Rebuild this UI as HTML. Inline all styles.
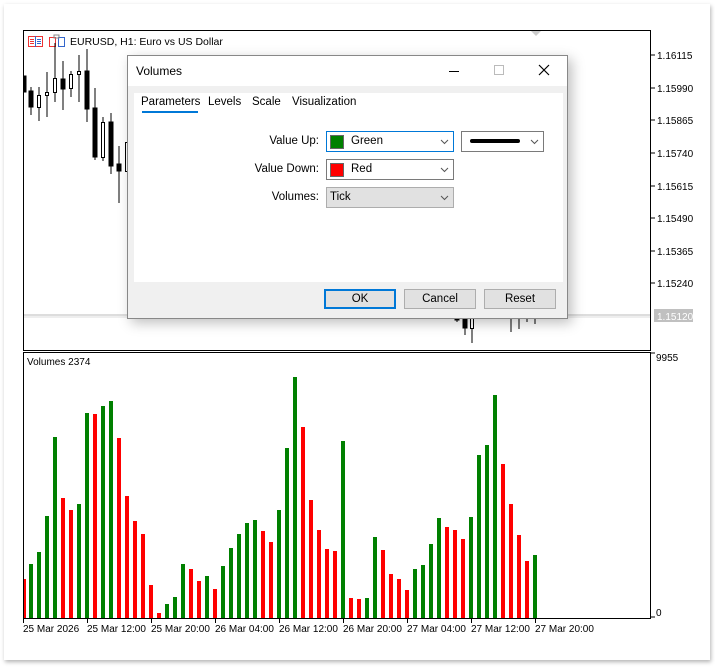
<!DOCTYPE html>
<html><head><meta charset="utf-8"><style>
html,body{margin:0;padding:0;background:#fff;width:715px;height:670px;overflow:hidden;font-family:"Liberation Sans",sans-serif}
.frame{position:absolute;left:4px;top:4px;width:706px;height:656px;background:#fff;box-shadow:1px 2px 4px rgba(0,0,0,.3)}
svg.main{position:absolute;left:0;top:0}
.dlg{position:absolute;left:127px;top:55px;width:439px;height:262px;background:#f0f0f0;border:1px solid #888;box-shadow:4px 4px 12px rgba(0,0,0,.25);font-size:11.5px;color:#000}
.tb{position:absolute;left:0;top:0;width:439px;height:30px;background:#fff}
.tb .t{position:absolute;left:8px;top:8px;font-size:12px}
.inner{position:absolute;left:6px;top:37px;width:429px;height:189px;background:#fff}
.tab{position:absolute;top:3px;font-size:11.5px}
.lbl{position:absolute;right:248px;font-size:11.5px;text-align:right}
.cb{position:absolute;box-sizing:border-box;height:21px;border:1px solid #7a7a7a;background:#fff}
.cb .sw{position:absolute;left:3px;top:3px;width:12px;height:12px;border:1px solid #666}
.cb span{position:absolute;left:24px;top:3px;font-size:11.5px}
.cb svg.ar{position:absolute;left:auto;right:4px;top:5px;width:9px;height:9px}
.btn{position:absolute;top:233px;width:72px;height:20px;box-sizing:border-box;border:1px solid #adadad;background:#e1e1e1;text-align:center;line-height:18px;font-size:11.5px}
</style></head><body>
<div class="frame"></div>
<svg class="main" width="715" height="670" font-family="Liberation Sans, sans-serif" font-size="10">
<rect x="23.5" y="30.5" width="627" height="320" fill="none" stroke="#000"/>
<rect x="23.5" y="352.5" width="627" height="266" fill="none" stroke="#000"/>
<line x1="24" y1="315" x2="650" y2="315" stroke="#bbb"/><line x1="24" y1="317" x2="650" y2="317" stroke="#ddd"/>
<polygon points="531,31 541,31 536,36" fill="#ccc"/>
<rect x="28.5" y="36.5" width="14" height="10" fill="none" stroke="#e33"/><line x1="35.5" y1="36" x2="35.5" y2="47" stroke="#36c"/>
<path d="M30 39.5h4M30 41.5h4M30 43.5h4" stroke="#e33"/><path d="M37 39.5h4M37 41.5h4M37 43.5h4" stroke="#36c"/>
<rect x="49.5" y="37.5" width="6" height="9" fill="none" stroke="#e33"/><rect x="58.5" y="37.5" width="6" height="9" fill="none" stroke="#36c"/><rect x="54" y="35" width="5" height="3" fill="none" stroke="#888"/>
<text x="70" y="45" font-size="10.5">EURUSD, H1:  Euro vs US Dollar</text>
<g stroke="#000" fill="#000">
<rect x="24" y="76" width="2" height="16"/>
<line x1="31" y1="87" x2="31" y2="115"/><rect x="29" y="91" width="4" height="16"/>
<line x1="39" y1="87" x2="39" y2="121"/><rect x="37.5" y="95.5" width="3" height="12" fill="#fff"/>
<line x1="47" y1="72" x2="47" y2="117"/><rect x="45.5" y="92.5" width="3" height="3" fill="#fff"/>
<line x1="55" y1="43" x2="55" y2="102"/><rect x="53.5" y="78.5" width="3" height="14" fill="#fff"/>
<line x1="63" y1="61" x2="63" y2="110"/><rect x="61" y="79" width="4" height="10"/>
<line x1="71" y1="71" x2="71" y2="97"/><rect x="69.5" y="74.5" width="3" height="14" fill="#fff"/>
<line x1="79" y1="55" x2="79" y2="102"/><rect x="77.5" y="71.5" width="3" height="3" fill="#fff"/>
<line x1="87" y1="49" x2="87" y2="122"/><rect x="85" y="71" width="4" height="38"/>
<line x1="95" y1="88" x2="95" y2="160"/><rect x="93" y="108" width="4" height="49"/>
<line x1="103" y1="117" x2="103" y2="161"/><rect x="101.5" y="122.5" width="3" height="35" fill="#fff"/>
<line x1="111" y1="113" x2="111" y2="174"/><rect x="109" y="122" width="4" height="44"/>
<line x1="119" y1="146" x2="119" y2="203"/><rect x="117" y="164" width="4" height="7"/>
<rect x="125.5" y="142.5" width="3" height="29" fill="#fff"/>
<rect x="455" y="317" width="4" height="3"/><line x1="457" y1="317" x2="457" y2="322"/>
<line x1="465" y1="317" x2="465" y2="335"/><rect x="463" y="319" width="4" height="9"/>
<line x1="472" y1="317" x2="472" y2="343"/><rect x="470.5" y="317.5" width="3" height="11" fill="#fff"/>
<line x1="511" y1="317" x2="511" y2="332"/><line x1="519" y1="317" x2="519" y2="329"/><line x1="527" y1="317" x2="527" y2="322"/><line x1="535" y1="317" x2="535" y2="324"/>
</g>
<g stroke="#000"><path d="M651 55h4M651 88h4M651 120h4M651 153h4M651 186h4M651 218h4M651 251h4M651 283h4M651 353h4M651 617h4"/></g>
<g font-size="10"><text x="657" y="59">1.16115</text><text x="657" y="92">1.15990</text><text x="657" y="124">1.15865</text><text x="657" y="157">1.15740</text><text x="657" y="190">1.15615</text><text x="657" y="222">1.15490</text><text x="657" y="255">1.15365</text><text x="657" y="287">1.15240</text>
<rect x="654" y="309" width="39" height="13" fill="#c0c0c0"/><text x="657" y="320" fill="#fff">1.15120</text>
<text x="656" y="361">9955</text><text x="656" y="616">0</text>
<text x="27" y="365">Volumes 2374</text></g>
<g id="bars"></g>
<g stroke="#000"><path d="M23.5 618v5M87.5 618v5M151.5 618v5M215.5 618v5M279.5 618v5M343.5 618v5M407.5 618v5M471.5 618v5M535.5 618v5"/></g>
<g font-size="10"><text x="23" y="632">25 Mar 2026</text><text x="87" y="632">25 Mar 12:00</text><text x="151" y="632">25 Mar 20:00</text><text x="215" y="632">26 Mar 04:00</text><text x="279" y="632">26 Mar 12:00</text><text x="343" y="632">26 Mar 20:00</text><text x="407" y="632">27 Mar 04:00</text><text x="471" y="632">27 Mar 12:00</text><text x="535" y="632">27 Mar 20:00</text></g>
</svg>
<script>
var d=[["r",579],["g",564],["g",552],["g",516],["g",437],["r",498],["r",510],["g",504],["g",413],["r",414],["g",406],["g",401],["r",438],["r",496],["r",521],["r",534],["r",585],["r",613],["g",604],["g",597],["g",564],["r",569],["r",581],["g",576],["r",589],["g",566],["g",548],["g",534],["g",523],["g",520],["r",531],["r",542],["g",510],["g",448],["g",377],["r",427],["r",500],["r",530],["r",549],["r",551],["g",441],["r",598],["r",599],["g",598],["g",537],["r",550],["r",574],["r",579],["r",590],["g",569],["g",565],["g",544],["g",518],["r",527],["r",530],["r",539],["g",517],["g",455],["g",445],["g",395],["r",464],["r",504],["r",535],["r",561],["g",555]];
var s="";for(var i=0;i<d.length;i++){var x=i==0?24:29+8*(i-1),w=i==0?2:4;s+='<rect x="'+x+'" y="'+d[i][1]+'" width="'+w+'" height="'+(618-d[i][1])+'" fill="'+(d[i][0]=="g"?"#008000":"#ff0000")+'"/>';}
document.getElementById("bars").innerHTML=s;
</script>
<div class="dlg">
 <div class="tb"><div class="t">Volumes</div>
  <svg width="439" height="30" style="position:absolute;left:0;top:0"><path d="M321 15.5h10" stroke="#000"/><rect x="366.5" y="9.5" width="9" height="9" fill="none" stroke="#bbb"/><path d="M411 9l10 10M421 9l-10 10" stroke="#000" stroke-width="1.2"/></svg>
 </div>
 <div class="inner">
  <div class="tab" style="left:7px">Parameters</div><div style="position:absolute;left:8px;top:18px;width:56px;height:2px;background:#0078d7"></div>
  <div class="tab" style="left:74px">Levels</div><div class="tab" style="left:118px">Scale</div><div class="tab" style="left:158px">Visualization</div>
 </div>
 <div class="lbl" style="top:79px">Value Up:</div>
 <div class="lbl" style="top:107px">Value Down:</div>
 <div class="lbl" style="top:135px">Volumes:</div>
 <div class="cb" style="left:198px;top:75px;width:128px;border-color:#0078d7"><div class="sw" style="background:#008000"></div><span>Green</span><svg class="ar" viewBox="0 0 9 9"><path d="M1 3l3.5 3.5L8 3" fill="none" stroke="#555"/></svg></div>
 <div class="cb" style="left:333px;top:75px;width:83px"><div style="position:absolute;left:8px;top:7px;width:50px;height:4px;background:#000;border-radius:2px"></div><svg class="ar" viewBox="0 0 9 9"><path d="M1 3l3.5 3.5L8 3" fill="none" stroke="#555"/></svg></div>
 <div class="cb" style="left:198px;top:103px;width:128px"><div class="sw" style="background:#ff0000"></div><span>Red</span><svg class="ar" viewBox="0 0 9 9"><path d="M1 3l3.5 3.5L8 3" fill="none" stroke="#555"/></svg></div>
 <div class="cb" style="left:198px;top:131px;width:128px;background:#e1e1e1;border-color:#adadad"><span style="left:3px">Tick</span><svg class="ar" viewBox="0 0 9 9"><path d="M1 3l3.5 3.5L8 3" fill="none" stroke="#555"/></svg></div>
 <div class="btn" style="left:196px;border:2px solid #0078d7;line-height:16px">OK</div>
 <div class="btn" style="left:276px">Cancel</div>
 <div class="btn" style="left:356px">Reset</div>
</div>
</body></html>
